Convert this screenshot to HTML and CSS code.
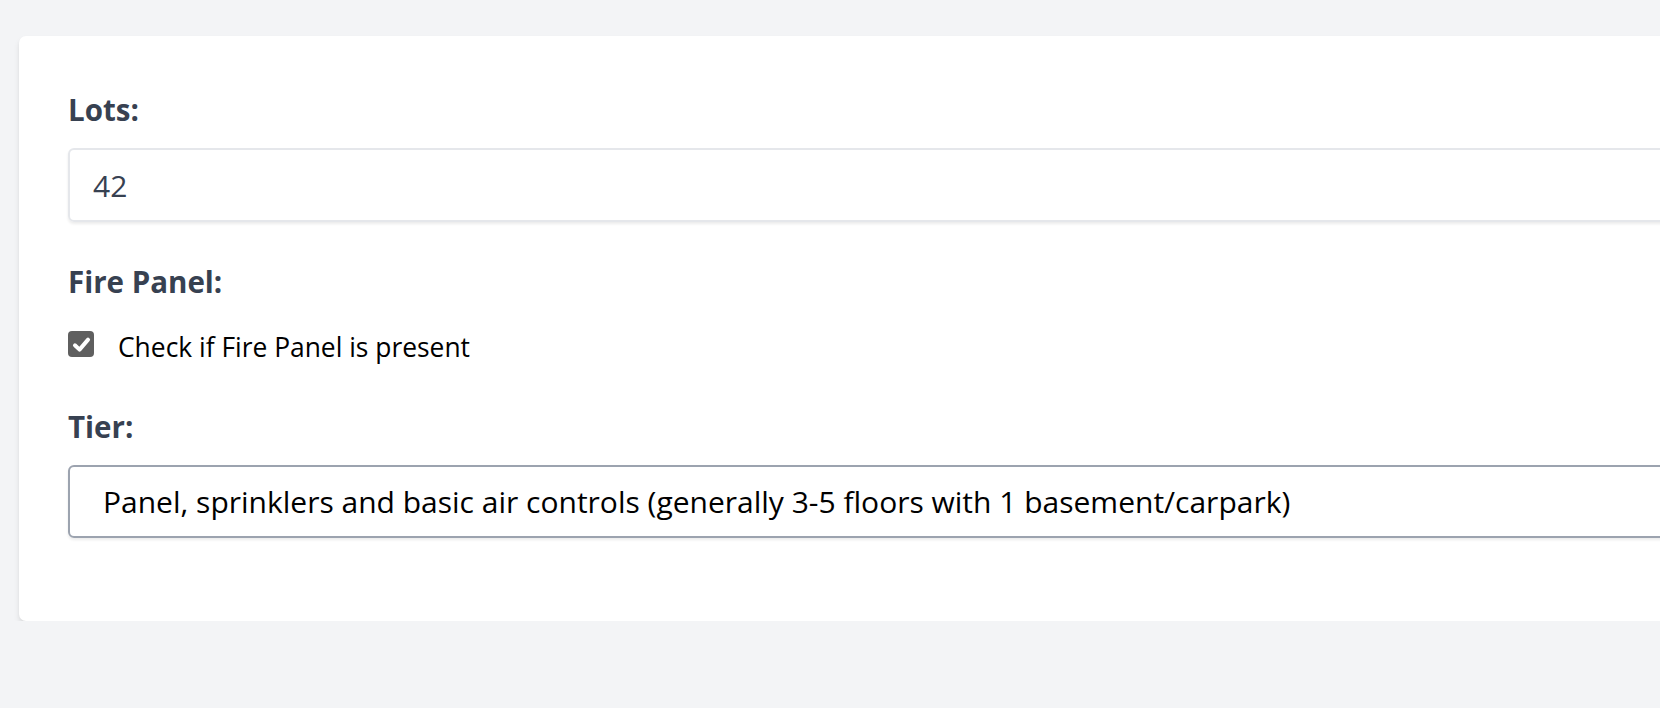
FILE: index.html
```html
<!DOCTYPE html>
<html lang="en">
<head>
<meta charset="utf-8">
<title>Building form</title>
<link rel="stylesheet" href="styles.css">
</head>
<body>
<div class="page">
  <form class="card">
    <div class="field">
      <label class="label" for="lots">Lots:</label>
      <div class="input" id="lots">42</div>
    </div>
    <div class="field field-fire">
      <div class="label label-fire">Fire Panel:</div>
      <div class="check-row">
        <span class="checkbox">
          <svg viewBox="0 0 16 16" width="21" height="21"><path d="M3 8.6 L6.5 11.9 L13 4.3" fill="none" stroke="#fff" stroke-width="3" stroke-linecap="round" stroke-linejoin="round"/></svg>
        </span>
        <span class="check-text">Check if Fire Panel is present</span>
      </div>
    </div>
    <div class="field field-tier">
      <div class="label">Tier:</div>
      <div class="select">Panel, sprinklers and basic air controls (generally 3-5 floors with 1 basement/carpark)</div>
    </div>
  </form>
</div>
</body>
</html>
```
FILE: styles.css
```css
html, body {
  margin: 0;
  padding: 0;
}
body {
  background: #f3f4f6;
  overflow: hidden;
  font-family: "Open Sans", "Noto Sans", sans-serif;
}
.page {
  padding: 36px 0 0 19px;
  width: 1800px;
}
.card {
  background: #fff;
  border-radius: 7px;
  box-shadow: 0 4px 7px -1px rgba(0,0,0,0.11), 0 2px 4px -1px rgba(0,0,0,0.06);
  padding: 53px 48px 83px 49px;
  display: flex;
  flex-direction: column;
}
.field {
  display: flex;
  flex-direction: column;
}
.field-fire {
  margin-top: 39px;
}
.field-tier {
  margin-top: 41px;
}
.label {
  font-weight: 700;
  font-size: 29.5px;
  line-height: 42px;
  color: #374151;
  margin-bottom: 17px;
}
.label-fire {
  margin-bottom: 26px;
}
.input {
  height: 70px;
  border: 2px solid #e5e7eb;
  border-radius: 6px;
  box-shadow: 0 2px 3px rgba(0,0,0,0.08);
  padding-left: 23px;
  display: flex;
  align-items: center;
  font-size: 30px;
  color: #374151;
}
.check-row {
  display: flex;
  align-items: flex-start;
  gap: 24px;
  height: 36px;
  line-height: 36px;
}
.checkbox {
  margin-top: 2px;
  width: 26px;
  height: 26px;
  border-radius: 4px;
  background: #5f5f5f;
  display: flex;
  align-items: center;
  justify-content: center;
}
.check-text {
  font-size: 26.4px;
  color: #000;
}
.select {
  height: 69px;
  border: 2px solid #9ca3af;
  border-radius: 6px;
  box-shadow: 0 2px 3px rgba(0,0,0,0.08);
  padding-left: 33px;
  display: flex;
  align-items: center;
  font-size: 30px;
  color: #000;
}
```
